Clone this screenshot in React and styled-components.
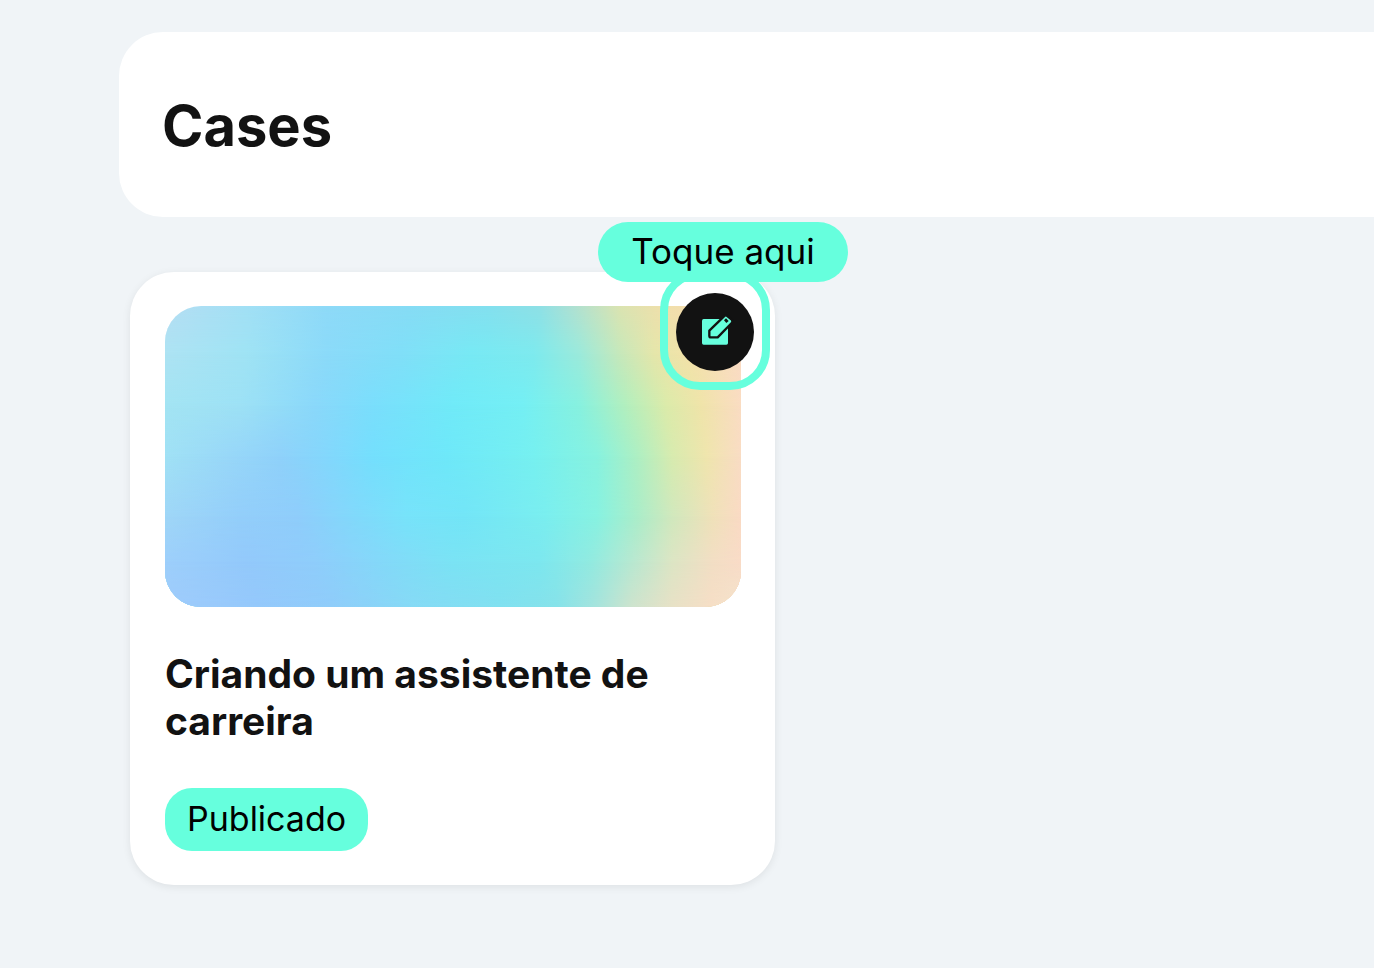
import React from "react";
import styled, { createGlobalStyle, css } from "styled-components";

const MINT = "#66ffdd";
const INK = "#121212";

const GlobalStyle = createGlobalStyle`
  *, *::before, *::after { box-sizing: border-box; }
  body {
    margin: 0;
    background: #f0f4f7;
    color: ${INK};
    font-family: Inter, "Liberation Sans", sans-serif;
  }
`;

const Page = styled.main`
  display: flex;
  flex-direction: column;
  gap: 55px;
  padding: 32px 0 80px 119px;
  overflow-x: hidden;
`;

const Header = styled.header`
  display: flex;
  align-items: center;
  padding: 60px 43px 56px;
  background: #fff;
  border-radius: 44px 0 0 44px;
`;

const PageTitle = styled.h1`
  margin: 0;
  font-size: 56px;
  line-height: 69px;
  font-weight: 700;
`;

const CardList = styled.section`
  display: grid;
  grid-template-columns: minmax(0, 645px);
  padding-left: 11px;
`;

const Card = styled.article`
  position: relative;
  display: flex;
  flex-direction: column;
  align-items: flex-start;
  padding: 34px 34px 34px 35px;
  background: #fff;
  border-radius: 44px;
  box-shadow: 0 2px 8px rgba(18, 18, 18, 0.08);
`;

const Cover = styled.div`
  position: relative;
  width: 100%;
  aspect-ratio: 576 / 301;
  border-radius: 36px;
  overflow: hidden;
`;

const Band = styled.div`
  position: absolute;
  inset: 0;
  background: linear-gradient(to right, ${(p) => p.$stops});
  ${(p) =>
    p.$to > 0 &&
    css`
      mask-image: linear-gradient(to bottom, transparent ${p.$from}%, #000 ${p.$to}%);
    `}
`;

const CardTitle = styled.h2`
  margin: 43px 0 0;
  font-size: 39px;
  line-height: 47px;
  font-weight: 700;
`;

const Status = styled.span`
  margin-top: 44px;
  padding: 9px 22px 11px;
  border-radius: 27px;
  background: ${MINT};
  color: #000;
  font-size: 34px;
  line-height: 43px;
`;

const Highlight = styled.div`
  position: absolute;
  top: -2px;
  right: 5px;
  display: grid;
  place-items: center;
  width: 110px;
  height: 120px;
  padding-top: 4px;
  border: 8px solid ${MINT};
  border-radius: 40px;
`;

const EditButton = styled.button`
  display: grid;
  place-items: center;
  width: 78px;
  height: 78px;
  padding: 0;
  border: 0;
  border-radius: 50%;
  background: ${INK};
  cursor: pointer;
`;

const Tooltip = styled.div`
  position: absolute;
  top: -50px;
  right: -73px;
  width: 250px;
  padding-bottom: 2px;
  border-radius: 30px;
  background: ${MINT};
  color: #000;
  font-size: 35px;
  line-height: 58px;
  text-align: center;
  white-space: nowrap;
`;

const coverBands = [
  {
    from: 0,
    to: 0,
    stops:
      "#b5def3 0%, #a2e0f5 14%, #8edaf8 28%, #86dcf5 42%, #83e0ef 56%, #8ee0e6 65%, #afe1d2 71%, #dbe4b1 79%, #f1dfab 87%, #fbdcb8 100%",
  },
  {
    from: 0,
    to: 16,
    stops:
      "#ade3f3 0%, #9fe3f4 14%, #8bdaf9 28%, #80dff8 41%, #77e9f4 53%, #7deaee 64%, #9beadb 72%, #c6e8bb 79%, #e5e6aa 85%, #f3e2a9 91%, #fadbc4 100%",
  },
  {
    from: 16,
    to: 33,
    stops:
      "#a3e4f3 0%, #9de1f5 13%, #8ad8fa 26%, #7adefc 36%, #70eaf8 50%, #74eff4 62%, #87f1df 72%, #b2efbe 80%, #dbebaa 87%, #efe4a9 93%, #fadcc2 100%",
  },
  {
    from: 33,
    to: 50,
    stops:
      "#a0e1f5 0%, #98d7f8 11%, #8fd1fa 20%, #83d7fc 28%, #74dffd 36%, #6ee8f9 49%, #76f0f0 64%, #87f2df 75%, #adefc3 82%, #d7ebaf 88%, #efe5ad 94%, #f9dcc4 100%",
  },
  {
    from: 50,
    to: 70,
    stops:
      "#9fd6f7 0%, #93cefa 13%, #8fcdfb 23%, #81d9fb 33%, #77e3fa 42%, #73e5f7 52%, #7aeeef 66%, #87f2e1 75%, #aaedc9 82%, #d0e8bd 88%, #efe1b9 95%, #fadac4 100%",
  },
  {
    from: 70,
    to: 85,
    stops:
      "#9dcffb 0%, #93c9fb 14%, #8fcdfb 26%, #84d8f9 37%, #7ae3f4 50%, #7ce7ef 65%, #92eae0 74%, #b7e8d1 81%, #dce5c4 88%, #f2dec4 95%, #f9dbc7 100%",
  },
  {
    from: 85,
    to: 100,
    stops:
      "#9fcbfb 0%, #94c8fb 16%, #8fccfa 29%, #85daf5 43%, #80e0f0 58%, #86e2e9 68%, #a6e3dc 75%, #cde3cd 81%, #e7e1c6 88%, #f6dec6 95%, #f3e4cc 100%",
  },
];

function EditIcon() {
  return (
    <svg width="34" height="34" viewBox="-12 0 102 102" overflow="visible" aria-hidden="true">
      <rect x="0" y="12" width="78" height="77" rx="5" fill={MINT} />
      <path
        d="M22 47 L66 4 Q71 -1 76 3 L89 14 Q94 19 89 24 L47 67 H27 Q22 67 22 62 Z"
        fill={MINT}
        stroke={INK}
        strokeWidth="7"
        strokeLinejoin="round"
      />
      <path d="M72 10 L80 18 L73 24 L66 16 Z" fill={INK} />
    </svg>
  );
}

export default function App() {
  return (
    <>
      <GlobalStyle />
      <Page>
        <Header>
          <PageTitle>Cases</PageTitle>
        </Header>
        <CardList>
          <Card>
            <Cover>
              {coverBands.map((b) => (
                <Band key={b.to} $from={b.from} $to={b.to} $stops={b.stops} />
              ))}
            </Cover>
            <CardTitle>Criando um assistente de carreira</CardTitle>
            <Status>Publicado</Status>
            <Highlight>
              <EditButton type="button" aria-label="Editar" aria-describedby="edit-hint">
                <EditIcon />
              </EditButton>
            </Highlight>
            <Tooltip id="edit-hint" role="tooltip">
              Toque aqui
            </Tooltip>
          </Card>
        </CardList>
      </Page>
    </>
  );
}
